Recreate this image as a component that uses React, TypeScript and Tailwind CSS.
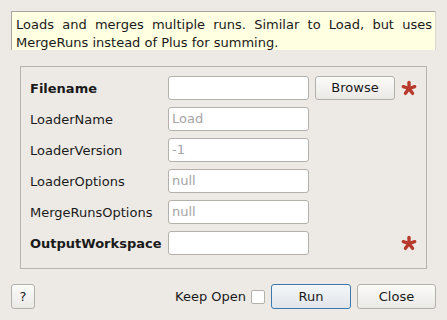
import React from "react";

function Star() {
  const arms = [0, 72, 144, 216, 288];
  return (
    <svg width="16" height="16" viewBox="0 0 16 16" className="block">
      {arms.map((a) => {
        const r = (a - 90) * Math.PI / 180;
        return (
          <line
            key={a}
            x1={8}
            y1={8.5}
            x2={8 + Math.cos(r) * 6}
            y2={8.5 + Math.sin(r) * 6}
            stroke="#b83a2c"
            strokeWidth={3.4}
            strokeLinecap="round"
          />
        );
      })}
    </svg>
  );
}

function Field({ label, bold, placeholder, browse, star }: { label: string; bold?: boolean; placeholder?: string; browse?: boolean; star?: boolean }) {
  return (
    <div className="flex items-center h-[24px]">
      <div className={`w-[138px] pt-[2px] text-[13px] text-[#1a1a1a] ${bold ? "font-bold" : ""}`}>{label}</div>
      <div className="w-[141px] h-[24px] bg-white border border-[#b4b1ac] rounded-[3px] flex items-center px-[3px] text-[13px] text-[#a4a4a4]">
        {placeholder}
      </div>
      {browse ? (
        <div className="ml-[6px] w-[80px] h-[24px] rounded-[3px] border border-[#b4b1ac] bg-gradient-to-b from-[#fbfbfa] to-[#ebe9e6] flex items-center justify-center text-[13px] text-[#1a1a1a]">
          Browse
        </div>
      ) : (
        <div className="ml-[6px] w-[80px]" />
      )}
      <div className="ml-[6px] w-[16px] flex items-center justify-center">{star ? <Star /> : null}</div>
    </div>
  );
}

export default function App() {
  return (
    <div className="w-[447px] h-[320px] bg-[#edeae6] overflow-hidden" style={{ fontFamily: '"DejaVu Sans", sans-serif' }}>
      <div className="pt-[11px] px-[11px]">
        <div className="h-[39px] bg-[#ffffe1] border-t border-l border-[#a8a6a2] border-r-[#d8d6d2] border-r pl-[4px] pr-[3px] pt-[4px] text-[13px] leading-[18px] text-[#1a1a1a] text-justify">
          Loads and merges multiple runs. Similar to Load, but uses MergeRuns instead of Plus for summing.
        </div>
      </div>
      <div className="mt-[16px] mx-[20px] h-[203px] border border-[#b6b3ae] pt-[9px] pl-[9px] flex flex-col gap-[7px]">
        <Field label="Filename" bold browse star />
        <Field label="LoaderName" placeholder="Load" />
        <Field label="LoaderVersion" placeholder="-1" />
        <Field label="LoaderOptions" placeholder="null" />
        <Field label="MergeRunsOptions" placeholder="null" />
        <Field label="OutputWorkspace" bold star />
      </div>
      <div className="mt-[15px] px-[11px] flex items-center h-[25px]">
        <div className="w-[24px] h-[25px] rounded-[3px] border border-[#b4b1ac] bg-gradient-to-b from-[#fbfbfa] to-[#ebe9e6] flex items-center justify-center text-[13px] text-[#1a1a1a]">
          ?
        </div>
        <div className="flex-1" />
        <div className="text-[13px] text-[#1a1a1a]">Keep Open</div>
        <div className="ml-[5px] w-[14px] h-[14px] bg-white border border-[#b4b1ac] rounded-[2px]" />
        <div className="ml-[6px] w-[80px] h-[25px] rounded-[3px] border border-[#3b78ad] bg-gradient-to-b from-[#f4f6f8] to-[#e1e5ea] flex items-center justify-center text-[13px] text-[#1a1a1a]">
          Run
        </div>
        <div className="ml-[6px] w-[79px] h-[25px] rounded-[3px] border border-[#b4b1ac] bg-gradient-to-b from-[#fbfbfa] to-[#ebe9e6] flex items-center justify-center text-[13px] text-[#1a1a1a]">
          Close
        </div>
      </div>
    </div>
  );
}
